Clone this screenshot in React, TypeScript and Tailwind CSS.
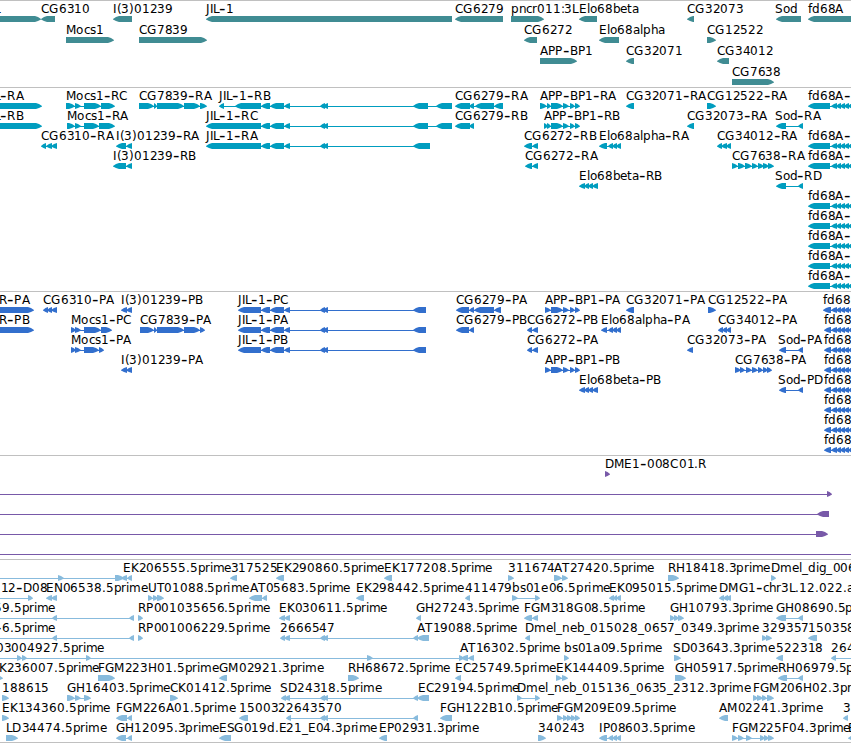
type Direction = "L" | "R";
type Span = [number, number];
// row, direction, label, label x, exons
type Feature = [number, Direction, string, number, Span[]];

type TrackProps = {
  features: Feature[];
  height: string;
  fill: string;
  rowHeight?: number;
};

// horizontal advance of each character at 12px
const ADVANCE: Record<string, number> = {
  A: 8.2, B: 8.2, C: 8.4, D: 9.2, E: 7.6, F: 6.9, G: 9.3, H: 9, I: 3.5, J: 3.5,
  K: 7.9, L: 6.4, M: 10.4, N: 9, P: 7.2, R: 8.3, S: 7.6, T: 7.3, U: 8.8,
  a: 7.2, b: 7.5, c: 6.2, d: 7.5, e: 7.2, f: 4.2, g: 7.5, h: 7.5, i: 3.3, l: 3.3,
  m: 11.3, n: 7.5, o: 7.1, p: 7.5, r: 4.7, s: 6.1, t: 4.5,
  "-": 7, ".": 3.9, ":": 3.9, _: 6.1, "(": 4.7, ")": 4.7,
};

function Label({ text, x, y }: { text: string; x: number; y: number }) {
  let pos = x;
  return (
    <text className="fill-black">
      {text.split(/(-)/).filter(Boolean).map((part, i) => {
        const xs = part.split("").map((ch) => {
          const at = Math.round(pos);
          pos += ADVANCE[ch] ?? 7.88;
          return at;
        });
        // hyphens are drawn wider than the font's own
        const wide = part === "-";
        return (
          <tspan key={i} x={xs.join(" ")} y={wide ? y + 1 : y} fontSize={wide ? 18 : 12}>
            {part}
          </tspan>
        );
      })}
    </text>
  );
}

function exonPoints([a, b]: Span, dir: Direction, y: number) {
  const head = Math.min(b - a, 6);
  const tip = dir === "L" ? a : b;
  const neck = dir === "L" ? a + head : b - head;
  const back = dir === "L" ? b : a;
  const mid = (tip + neck) / 2;
  return `${tip},${y + 3} ${mid},${y + 1.1} ${neck},${y} ${back},${y} ${back},${y + 6} ${neck},${y + 6} ${mid},${y + 5.1} ${tip},${y + 3.6}`;
}

function Track({ features, height, fill, rowHeight = 20 }: TrackProps) {
  return (
    <section className={`${height} ${fill} w-full shrink-0 overflow-hidden border-t border-[#c0c0c0]`}>
      <svg className="block h-full w-full" fontFamily="'DejaVu Sans', sans-serif" fontSize="12">
        {features.map(([row, dir, label, x, exons], i) => {
          const top = row * rowHeight;
          const start = exons.length ? exons[0][0] : 0;
          const end = exons.length ? exons[exons.length - 1][1] : 0;
          return (
            <g key={i}>
              {exons.length > 1 && (
                <rect x={start + 2} y={top + 18} width={end - start - 4} height={1} />
              )}
              {exons.map((exon, j) => (
                <polygon key={j} points={exonPoints(exon, dir, top + 15)} />
              ))}
              {label && <Label text={label} x={x} y={top + 12} />}
            </g>
          );
        })}
      </svg>
    </section>
  );
}

const genes: Feature[] = [
  [0, "R", "L", -6, [[-10, 41]]],
  [0, "L", "CG6310", 41, [[41, 55]]],
  [0, "L", "I(3)01239", 113, [[113, 132]]],
  [0, "L", "JIL-1", 206, [[206, 452]]],
  [0, "L", "CG6279", 455, [[455, 503]]],
  [0, "R", "pncr011:3L", 511, [[511, 544]]],
  [0, "L", "Elo68beta", 579, [[579, 597]]],
  [0, "L", "CG32073", 687, [[687, 694]]],
  [0, "L", "Sod", 775, [[776, 801]]],
  [0, "L", "fd68A", 808, [[808, 870]]],
  [1, "R", "Mocs1", 66, [[66, 114]]],
  [1, "R", "CG7839", 139, [[139, 207]]],
  [1, "L", "CG6272", 524, [[524, 537]]],
  [1, "L", "Elo68alpha", 599, [[599, 619]]],
  [1, "R", "CG12522", 707, [[707, 716]]],
  [2, "R", "APP-BP1", 540, [[540, 577]]],
  [2, "L", "CG32071", 626, [[626, 634]]],
  [2, "L", "CG34012", 717, [[717, 729]]],
  [3, "R", "CG7638", 732, [[732, 774]]],
];

// exons shared by the JIL-1 isoforms, right of their first one
const jilMiddle: Span[] = [[261, 270], [270, 284], [284, 290], [320, 325], [323, 328]];
const appExons: Span[] = [[551, 563], [563, 569], [570, 575], [575, 580]];
const betaExons: Span[] = [[579, 585], [584, 589], [588, 593], [592, 598]];
const smallFd: Span[] = [[831, 837], [836, 841], [840, 845], [844, 849], [848, 853], [852, 858]];

const transcripts: Feature[] = [
  [0, "R", "L-RA", -6, [[-10, 42]]],
  [1, "R", "L-RB", -6, [[-10, 42]]],
  [0, "R", "Mocs1-RC", 66, [[66, 75], [75, 81], [84, 101], [101, 115]]],
  [1, "R", "Mocs1-RA", 67, [[67, 75], [75, 81], [84, 99], [99, 115]]],
  [2, "L", "CG6310-RA", 41, [[41, 46], [46, 52], [51, 57]]],
  [2, "L", "I(3)01239-RA", 116, [[116, 126], [126, 132]]],
  [3, "L", "I(3)01239-RB", 113, [[113, 126], [126, 132]]],
  [0, "R", "CG7839-RA", 139, [[139, 154], [154, 157], [157, 184], [184, 200], [200, 207]]],
  [0, "L", "JIL-1-RB", 219, [[219, 224], [235, 261], ...jilMiddle, [413, 428], [436, 452]]],
  [1, "L", "JIL-1-RC", 206, [[206, 261], ...jilMiddle, [413, 428], [436, 452]]],
  [2, "L", "JIL-1-RA", 206, [[206, 261], ...jilMiddle, [413, 430]]],
  [0, "L", "CG6279-RA", 455, [[455, 470], [469, 474], [475, 494], [494, 503]]],
  [1, "L", "CG6279-RB", 455, [[455, 470], [469, 474]]],
  [0, "R", "APP-BP1-RA", 540, [[540, 547], [547, 551], ...appExons]],
  [1, "R", "APP-BP1-RB", 544, [[544, 548], [547, 551], ...appExons]],
  [2, "L", "CG6272-RB", 524, [[524, 532], [532, 538]]],
  [3, "L", "CG6272-RA", 525, [[525, 532], [532, 538]]],
  [2, "L", "Elo68alpha-RA", 599, [[599, 607], [608, 613], [612, 617], [616, 621]]],
  [4, "L", "Elo68beta-RB", 579, betaExons],
  [0, "L", "CG32071-RA", 626, [[626, 634]]],
  [0, "R", "CG12522-RA", 707, [[707, 716]]],
  [1, "L", "CG32073-RA", 687, [[687, 694]]],
  [1, "L", "Sod-RA", 775, [[776, 786], [798, 803]]],
  [2, "L", "CG34012-RA", 717, [[717, 722], [721, 727], [726, 731]]],
  [3, "R", "CG7638-RA", 732, [[732, 738], [738, 745], [745, 752], [752, 758], [758, 764], [763, 769], [768, 774]]],
  [4, "L", "Sod-RD", 775, [[776, 786], [798, 803]]],
  ...[0, 2, 3, 5, 6, 7, 8, 9].map(
    (row): Feature => [row, "L", "fd68A-", 808, [[808, 830], ...smallFd]]
  ),
];

const proteins: Feature[] = [
  [0, "R", "R-PA", -1, [[-10, 34]]],
  [1, "R", "R-PB", -1, [[-10, 34]]],
  [0, "L", "CG6310-PA", 43, [[43, 48], [47, 52], [51, 57]]],
  [0, "L", "I(3)01239-PB", 121, [[121, 127], [126, 132]]],
  [3, "L", "I(3)01239-PA", 121, [[121, 127], [126, 132]]],
  [0, "L", "JIL-1-PC", 238, [[238, 261], ...jilMiddle, [413, 426]]],
  [1, "L", "JIL-1-PA", 238, [[238, 261], ...jilMiddle, [413, 426]]],
  [2, "L", "JIL-1-PB", 238, [[238, 261], ...jilMiddle, [413, 426]]],
  [1, "R", "Mocs1-PC", 71, [[71, 76], [75, 81], [84, 101], [101, 112]]],
  [2, "R", "Mocs1-PA", 71, [[71, 76], [75, 81], [84, 99], [99, 104]]],
  [1, "R", "CG7839-PA", 140, [[140, 154], [154, 157], [157, 184], [184, 200], [200, 205]]],
  [0, "L", "CG6279-PA", 456, [[456, 469], [469, 474], [474, 494], [494, 501]]],
  [1, "L", "CG6279-PB", 456, [[456, 469], [469, 474]]],
  [1, "L", "CG6272-PB", 527, [[527, 532], [532, 538]]],
  [2, "L", "CG6272-PA", 527, [[527, 532], [532, 538]]],
  [0, "R", "APP-BP1-PA", 545, [[545, 551], ...appExons]],
  [3, "R", "APP-BP1-PB", 545, [[545, 551], ...appExons]],
  [1, "L", "Elo68alpha-PA", 601, [[601, 607], [608, 613], [612, 617], [616, 621]]],
  [4, "L", "Elo68beta-PB", 579, betaExons],
  [0, "L", "CG32071-PA", 626, [[626, 634]]],
  [0, "R", "CG12522-PA", 708, [[708, 716]]],
  [1, "L", "CG34012-PA", 718, [[718, 723], [722, 727], [726, 731]]],
  [2, "L", "CG32073-PA", 687, [[687, 693]]],
  [2, "L", "Sod-PA", 778, [[779, 786], [798, 803]]],
  [3, "R", "CG7638-PA", 735, [[735, 741], [740, 745], [746, 752], [752, 758], [758, 763], [763, 768], [767, 772]]],
  [4, "L", "Sod-PD", 778, [[779, 786], [798, 803]]],
  ...[0, 1, 2, 3, 4, 5, 6, 7].map(
    (row): Feature => [row, "L", "fd68", row === 0 ? 823 : 824, [[row === 0 ? 823 : 824, 831], ...smallFd]]
  ),
];

const bacs: Feature[] = [
  [0, "R", "DME1-008C01.R", 604.6, [[605, 610]]],
  [1, "R", "", 0, [[-20, -10], [827, 832]]],
  [2, "L", "", 0, [[-20, -10], [817, 829]]],
  [3, "R", "", 0, [[-20, -10], [816, 828]]],
  [4, "R", "", 0, [[-20, -10], [870, 880]]],
];

const ests: Feature[] = [
  [0, "R", "", 0, [[-20, -10], [58, 64], [115, 124]]],
  [0, "L", "EK206555.5prime", 123, [[121, 127], [127, 132]]],
  [0, "L", "317525", 230.5, [[230, 237]]],
  [0, "L", "EK290860.5prime", 276, [[276, 284]]],
  [0, "L", "EK177208.5prime", 384, [[384, 392]]],
  [0, "R", "311674", 508, [[508, 514]]],
  [0, "R", "AT27420.5prime", 554, [[554, 562], [562, 568]]],
  [0, "R", "RH18418.3prime", 668, [[668, 679]]],
  [0, "R", "Dmel_dig_006", 771, [[771, 776]]],

  [1, "R", "12-D08", 0.5, [[-20, -10], [28, 33]]],
  [1, "L", "EN06538.5prime", 46, [[46, 52], [51, 57]]],
  [1, "R", "UT01088.5prime", 148, [[148, 153], [153, 158], [157, 164]]],
  [1, "L", "AT05683.5prime", 250, [[249, 262], [262, 267]]],
  [1, "L", "EK298442.5prime", 356, [[356, 364]]],
  [1, "L", "411479", 465, [[465, 470]]],
  [1, "R", "bs01e06.5prime", 512, [[512, 518], [535, 540]]],
  [1, "L", "EK095015.5prime", 609, [[609, 614], [613, 617], [616, 621]]],
  [1, "L", "DMG1-chr3L.12.022.a", 719, [[719, 724], [723, 728], [726, 731]]],

  [2, "L", "59.5prime", -6, [[-20, -10], [52, 57], [129, 134]]],
  [2, "R", "RP001035656.5prime", 138, [[138, 143]]],
  [2, "L", "EK030611.5prime", 279, [[279, 285], [284, 290]]],
  [2, "L", "GH27243.5prime", 416, [[416, 421]]],
  [2, "L", "FGM318G08.5prime", 524, [[524, 532], [532, 538]]],
  [2, "R", "GH10793.3prime", 670, [[670, 675], [674, 679], [678, 684]]],
  [2, "L", "GH08690.5p", 776, [[776, 786], [798, 803]]],

  [3, "L", "-6.5prime", -5, [[-20, -10], [52, 57], [129, 134]]],
  [3, "R", "RP001006229.5prime", 138, [[138, 143]]],
  [3, "L", "2666547", 280, [[280, 285], [284, 290], [320, 325], [323, 328], [413, 418], [417, 429]]],
  [3, "L", "AT19088.5prime", 417, []],
  [3, "L", "Dmel_neb_015028_0657_0349.3prime", 525, [[525, 530]]],
  [3, "R", "329357", 762, [[762, 767], [766, 772]]],
  [3, "L", "150358", 808, [[808, 817]]],

  [4, "R", "03004927.5prime", -4.3, [[-20, -10], [17, 22], [22, 27], [86, 91], [367, 373], [459, 464]]],
  [4, "L", "AT16302.5prime", 460, [[461, 468], [468, 474]]],
  [4, "R", "bs01a09.5prime", 564, [[564, 569]]],
  [4, "R", "SD03643.3prime", 673, [[674, 681]]],
  [4, "L", "522318", 776, [[776, 783]]],
  [4, "L", "264", 831, [[831, 836], [870, 880]]],

  [5, "R", "K236007.5prime", -1.4, [[-5, 3]]],
  [5, "R", "FGM223H01.5prime", 98, [[98, 115]]],
  [5, "L", "GM02921.3prime", 219, [[219, 227]]],
  [5, "R", "RH68672.5prime", 348, [[348, 359]]],
  [5, "L", "EC25749.5prime", 455, [[455, 461]]],
  [5, "R", "EK144409.5prime", 556, [[556, 562], [562, 568]]],
  [5, "R", "GH05917.5prime", 675, [[675, 686]]],
  [5, "L", "RH06979.5p", 778, [[778, 787], [798, 803]]],

  [6, "R", "188615", 2, [[2, 9]]],
  [6, "R", "GH16403.5prime", 67, [[67, 75], [75, 81], [84, 91]]],
  [6, "R", "CK01412.5prime", 170, [[170, 178]]],
  [6, "L", "SD24318.5prime", 280, [[281, 286], [284, 290], [320, 325], [323, 328], [413, 418], [417, 429]]],
  [6, "L", "EC29194.5prime", 418, []],
  [6, "R", "Dmel_neb_015136_0635_2312.3prime", 517, [[517, 522], [535, 540]]],
  [6, "R", "FGM206H02.3prime", 753, [[753, 758], [757, 763], [762, 767], [767, 774]]],

  [7, "R", "EK134360.5prime", 2, [[2, 9]]],
  [7, "L", "FGM226A01.5prime", 116, [[116, 127], [127, 132]]],
  [7, "L", "150032", 239, [[239, 248]]],
  [7, "L", "2643570", 286.4, [[286, 291], [320, 325], [323, 328], [413, 418]]],
  [7, "L", "FGH122B10.5prime", 440, [[440, 452]]],
  [7, "R", "FGM209E09.5prime", 557, [[557, 563], [563, 568], [567, 572], [571, 576], [575, 580]]],
  [7, "L", "AM02241.3prime", 719, [[719, 728]]],
  [7, "L", "3", 843, [[843, 848]]],

  [8, "R", "LD34474.5prime", 6, [[6, 18]]],
  [8, "L", "GH12095.3prime", 116, [[116, 126], [127, 132]]],
  [8, "L", "ESG019d.E21_E04.3prime", 219, [[219, 231]]],
  [8, "L", "EP02931.3prime", 379, [[379, 387]]],
  [8, "R", "340243", 538, [[538, 546]]],
  [8, "L", "IP08603.5prime", 599, [[599, 607], [608, 613], [612, 617], [616, 621]]],
  [8, "R", "FGM225F04.3prime", 732, [[732, 738], [738, 744], [746, 752], [760, 765], [764, 769], [768, 774]]],
  [8, "L", "E", 848, [[848, 860]]],
];

export default function App() {
  return (
    <main className="flex h-[743px] w-full flex-col overflow-hidden border-b border-[#c0c0c0] bg-white">
      <Track features={genes} height="h-[87px]" fill="fill-[#408c93]" rowHeight={21} />
      <Track features={transcripts} height="h-[204px]" fill="fill-[#009dbf]" />
      <Track features={proteins} height="h-[164px]" fill="fill-[#326fcd]" />
      <Track features={bacs} height="h-[104px]" fill="fill-[#7859a8]" />
      <Track features={ests} height="h-[183px]" fill="fill-[#88bbdd]" />
    </main>
  );
}
